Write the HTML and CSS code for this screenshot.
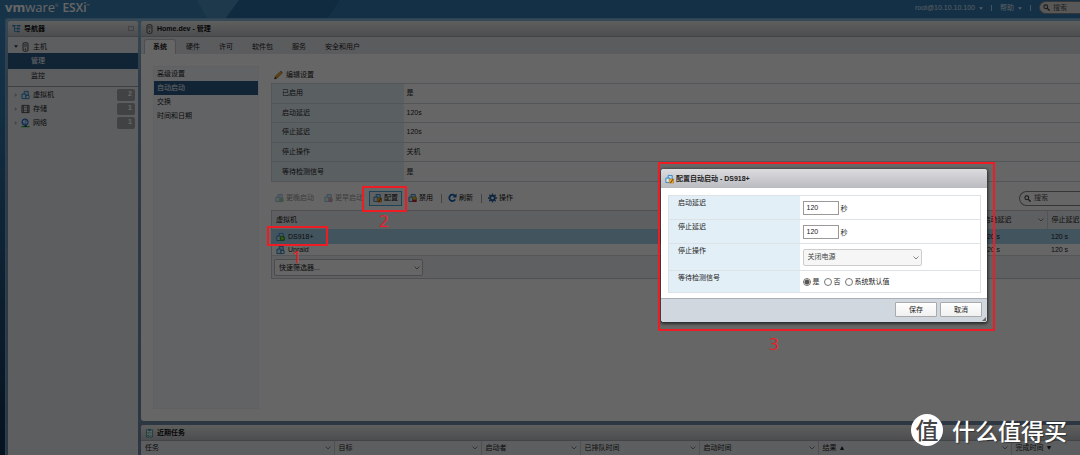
FILE: index.html
```html
<!DOCTYPE html>
<html lang="zh-CN">
<head>
<meta charset="utf-8">
<title>VMware ESXi</title>
<link rel="stylesheet" href="styles.css">
</head>
<body>
<svg class="defs" aria-hidden="true">
  <symbol id="i-vm" viewBox="0 0 20 20"><path d="M7 2h9v9H7z" fill="#b9def5" stroke="#2a7fbd" stroke-width="2"/><path d="M2 8h9v10H2z" fill="#cfe9fa" stroke="#2a7fbd" stroke-width="2"/><path d="M11 11h7v7h-7z" fill="#e4f3fc" stroke="#2a7fbd" stroke-width="2"/></symbol>
  <symbol id="i-vm-on" viewBox="0 0 20 20"><use href="#i-vm"/><circle cx="14" cy="13" r="6" fill="#3a9b1c"/><path d="M12 9l6 4-6 4z" fill="#a2ef4c"/></symbol>
  <symbol id="i-vm-up" viewBox="0 0 20 20"><use href="#i-vm"/><path d="M12 9h5v5h3l-5.500 6L9 14h3z" fill="#49a942"/></symbol>
  <symbol id="i-vm-down" viewBox="0 0 20 20"><use href="#i-vm"/><path d="M12 9h5v5h3l-5.500 6L9 14h3z" fill="#d43c3c"/></symbol>
  <symbol id="i-vm-edit" viewBox="0 0 20 20"><use href="#i-vm"/><path d="M9 10h10v9H9z" fill="#efb42c" stroke="#a96710"/><path d="M11 18l6-8 2 1-6 8z" fill="#8b3b10"/></symbol>
  <symbol id="i-vm-off" viewBox="0 0 20 20"><use href="#i-vm"/><path d="M10 8h9v5h-9z" fill="#e6b822" stroke="#99720a"/><path d="M10 14h9v5h-9z" fill="#d32222"/></symbol>
  <symbol id="i-host" viewBox="0 0 14 22"><rect x="1.500" y="1.500" width="11" height="19" rx="3" fill="#d5d5d5" stroke="#444" stroke-width="2"/><path d="M4 6h6M4 9h6" stroke="#555" stroke-width="1.500"/><circle cx="7" cy="16" r="1.500" fill="#444"/></symbol>
  <symbol id="i-tree" viewBox="0 0 22 20"><path d="M1 2h10M6 2v14h6M6 9h6" fill="none" stroke="#2682bf" stroke-width="2"/><path d="M1 0h6v4H1zM12 0h9v4h-9zM12 7h7v4h-7zM12 14h7v4h-7z" fill="#2682bf"/></symbol>
  <symbol id="i-disk" viewBox="0 0 20 20"><path d="M2 2h16v16H2z" fill="#ddd" stroke="#444" stroke-width="2"/><path d="M2 7h16M2 13h16" stroke="#777" stroke-width="1.500"/><path d="M5 2v16M15 2v16" stroke="#444" stroke-width="2"/></symbol>
  <symbol id="i-net" viewBox="0 0 20 20"><circle cx="9" cy="8" r="7" fill="#69aef0" stroke="#1554b5" stroke-width="2"/><path d="M4 6l4-2 2 3-3 4zM11 8l4-1-2 5z" fill="#dff0ff"/><path d="M1 18h18" stroke="#23b41a" stroke-width="3"/><path d="M8 15h5v4H8z" fill="#15418b"/></symbol>
  <symbol id="i-pencil" viewBox="0 0 20 20"><path d="M1 19l2-6L14 2l4 4L7 17z" fill="#e5a52c" stroke="#8d5a14"/><path d="M1 19l2-5 3 3z" fill="#222"/><path d="M14 2l2-1 3 3-1 2z" fill="#666"/></symbol>
  <symbol id="i-refresh" viewBox="0 0 20 20"><path d="M16 13a7 7 0 1 1-1-8" fill="none" stroke="#1562b3" stroke-width="4"/><path d="M19 0v9h-9z" fill="#1562b3"/></symbol>
  <symbol id="i-gear" viewBox="0 0 20 20"><circle cx="10" cy="10" r="5" fill="none" stroke="#245f9e" stroke-width="4"/><path d="M10 0v4M10 16v4M0 10h4M16 10h4M3 3l3 3M14 14l3 3M17 3l-3 3M6 14l-3 3" stroke="#245f9e" stroke-width="3"/></symbol>
  <symbol id="i-search" viewBox="0 0 20 20"><circle cx="8" cy="8" r="5.500" fill="none" stroke="#444" stroke-width="3"/><path d="M12 12l7 7" stroke="#444" stroke-width="4"/></symbol>
  <symbol id="i-chev" viewBox="0 0 12 8"><path d="M1 1l5 5 5-5" fill="none" stroke="#777" stroke-width="1.800"/></symbol>
  <symbol id="i-tasks" viewBox="0 0 20 20"><path d="M3 3h14v16H3z" fill="#e9f6fb" stroke="#3b8ea8" stroke-width="2"/><path d="M7 1h6v4H7z" fill="#3b8ea8"/><path d="M5 9l2 2 3-4M5 15l2 2 3-4" fill="none" stroke="#2c9c30" stroke-width="2"/><path d="M11 10h4M11 16h4" stroke="#3b8ea8" stroke-width="1.500"/></symbol>
  <symbol id="i-caret" viewBox="0 0 10 6"><path d="M0 0h10L5 6z" fill="currentColor"/></symbol>
  <symbol id="i-right" viewBox="0 0 6 10"><path d="M0 0l6 5-6 5z" fill="currentColor"/></symbol>
</svg>

<div class="app">
  <header class="topbar">
    <svg class="topbar-art" viewBox="0 0 1080 18" preserveAspectRatio="none" aria-hidden="true"><path d="M197 0h42l-13 18h-19z" fill="#4c90be"/><path d="M239 0h101l-12 18H226z" fill="#286aa0"/><path d="M340 0h740v18H328z" fill="#3278ae"/></svg>
    <div class="brand"><span class="vmw"><b>vm</b>ware<sup>®</sup></span><span class="esx">ESXi<sup>™</sup></span></div>
    <div class="account">
      <button class="topbtn">root@10.10.10.100 <svg class="caret"><use href="#i-caret"/></svg></button><span class="bar"></span>
      <button class="topbtn">帮助 <svg class="caret"><use href="#i-caret"/></svg></button><span class="bar"></span>
    </div>
    <label class="search search-top"><svg class="ic-s"><use href="#i-search"/></svg><input type="text" placeholder="搜索" aria-label="搜索"></label>
  </header>

  <div class="frame">
    <nav class="panel navigator">
      <h2 class="title"><svg class="ic"><use href="#i-tree"/></svg>导航器<span class="pin"></span></h2>
      <button class="node root"><svg class="tw"><use href="#i-caret"/></svg><svg class="ic"><use href="#i-host"/></svg>主机</button>
      <button class="node child on">管理</button>
      <button class="node child">监控</button>
      <div class="group">
        <button class="node"><svg class="tw dim"><use href="#i-right"/></svg><svg class="ic"><use href="#i-vm"/></svg>虚拟机<span class="count">2</span></button>
        <button class="node"><svg class="tw dim"><use href="#i-right"/></svg><svg class="ic"><use href="#i-disk"/></svg>存储<span class="count">1</span></button>
        <button class="node"><svg class="tw dim"><use href="#i-right"/></svg><svg class="ic"><use href="#i-net"/></svg>网络<span class="count">1</span></button>
      </div>
    </nav>

    <div class="right">
      <main class="panel main">
        <h1 class="title"><svg class="ic"><use href="#i-host"/></svg>Home.dev - 管理</h1>
        <div class="tabs">
          <button class="tab on">系统</button><button class="tab">硬件</button><button class="tab">许可</button><button class="tab">软件包</button><button class="tab">服务</button><button class="tab">安全和用户</button>
        </div>
        <div class="body">
          <div class="side">
            <button class="sideitem">高级设置</button>
            <button class="sideitem on">自动启动</button>
            <button class="sideitem">交换</button>
            <button class="sideitem">时间和日期</button>
          </div>
          <section class="content">
            <button class="edit"><svg class="ic"><use href="#i-pencil"/></svg>编辑设置</button>
            <table class="props">
              <tr><th>已启用</th><td>是</td></tr>
              <tr><th>启动延迟</th><td>120s</td></tr>
              <tr><th>停止延迟</th><td>120s</td></tr>
              <tr><th>停止操作</th><td>关机</td></tr>
              <tr><th>等待检测信号</th><td>是</td></tr>
            </table>
            <div class="toolbar">
              <button class="tool" disabled><svg class="ic"><use href="#i-vm-up"/></svg>更晚启动</button>
              <button class="tool" disabled><svg class="ic"><use href="#i-vm-down"/></svg>更早启动</button>
              <button class="tool focus"><svg class="ic"><use href="#i-vm-edit"/></svg>配置</button>
              <button class="tool"><svg class="ic"><use href="#i-vm-off"/></svg>禁用</button><span class="sep"></span>
              <button class="tool"><svg class="ic"><use href="#i-refresh"/></svg>刷新</button><span class="sep"></span>
              <button class="tool"><svg class="ic"><use href="#i-gear"/></svg>操作</button>
              <label class="search search-grid"><svg class="ic-s"><use href="#i-search"/></svg><input type="text" placeholder="搜索" aria-label="搜索虚拟机"></label>
            </div>
            <div class="gridbox">
              <table class="vms">
                <colgroup><col><col class="c-start"><col class="c-stop"></colgroup>
                <thead><tr><th>虚拟机</th><th><span class="hd">启动延迟<svg class="chev"><use href="#i-chev"/></svg></span></th><th>停止延迟</th></tr></thead>
                <tbody>
                  <tr class="on"><td><span class="vm"><svg class="ic"><use href="#i-vm-on"/></svg>DS918+</span></td><td>120 s</td><td>120 s</td></tr>
                  <tr class="cut"><td><span class="vm"><svg class="ic"><use href="#i-vm"/></svg>Unraid</span></td><td>120 s</td><td>120 s</td></tr>
                </tbody>
              </table>
              <div class="gridfoot"><span class="pick filter"><select aria-label="快速筛选器"><option>快速筛选器...</option></select><svg class="chev"><use href="#i-chev"/></svg></span></div>
            </div>
          </section>
        </div>
      </main>

      <section class="panel tasks">
        <h2 class="title"><svg class="ic"><use href="#i-tasks"/></svg>近期任务</h2>
        <table class="tasklist">
          <colgroup><col class="w-task"><col class="w-target"><col class="w-who"><col class="w-time"><col class="w-time"><col class="w-task"><col></colgroup>
          <tr>
            <th><span class="hd">任务<svg class="chev"><use href="#i-chev"/></svg></span></th>
            <th><span class="hd">目标<svg class="chev"><use href="#i-chev"/></svg></span></th>
            <th><span class="hd">启动者<svg class="chev"><use href="#i-chev"/></svg></span></th>
            <th><span class="hd">已排队时间<svg class="chev"><use href="#i-chev"/></svg></span></th>
            <th><span class="hd">启动时间<svg class="chev"><use href="#i-chev"/></svg></span></th>
            <th><span class="hd">结果 ▲<svg class="chev"><use href="#i-chev"/></svg></span></th>
            <th>完成时间 ▼</th>
          </tr>
        </table>
      </section>
    </div>
  </div>
</div>

<div class="shade"></div>

<form class="dialog" role="dialog" aria-labelledby="dlg-title">
  <h2 class="dlg-title" id="dlg-title"><svg class="ic"><use href="#i-vm-edit"/></svg>配置自动启动 - DS918+</h2>
  <div class="dlg-body">
    <table class="fields">
      <tr><th><label for="d-start">启动延迟</label></th><td><input class="num" id="d-start" type="text" value="120"> 秒</td></tr>
      <tr><th><label for="d-stop">停止延迟</label></th><td><input class="num" id="d-stop" type="text" value="120"> 秒</td></tr>
      <tr><th><label for="d-act">停止操作</label></th><td><span class="pick action"><select id="d-act"><option>关闭电源</option></select><svg class="chev"><use href="#i-chev"/></svg></span></td></tr>
      <tr><th>等待检测信号</th><td><div class="radios"><label><input type="radio" name="hb" checked>是</label><label><input type="radio" name="hb">否</label><label><input type="radio" name="hb">系统默认值</label></div></td></tr>
    </table>
  </div>
  <div class="dlg-foot"><button type="button" class="btn">保存</button><button type="button" class="btn">取消</button><span class="grip"></span></div>
</form>

<div class="mark mark-vm"></div><span class="step step-1">1</span>
<div class="mark mark-tool"></div><span class="step step-2">2</span>
<div class="mark mark-dialog"></div><span class="step step-3">3</span>
<div class="watermark"><span class="seal">值</span>什么值得买</div>
</body>
</html>
```

FILE: styles.css
```css
* { box-sizing: border-box; }
html, body { height: 100%; }
body {
  margin: 0;
  overflow: hidden;
  position: relative;
  font: 7px/10px "Liberation Sans", "Noto Sans CJK SC", sans-serif;
  color: #222;
  background: #16405f;
}
button, input, select { font: inherit; color: inherit; margin: 0; padding: 0; border: 0; background: none; }
button { display: flex; align-items: center; text-align: left; white-space: nowrap; }
h1, h2 { margin: 0; font-size: 7px; }
table { border-collapse: collapse; border-spacing: 0; }
th { font-weight: normal; text-align: left; }
td, th { padding: 0; }
.defs { position: absolute; width: 0; height: 0; }
.ic { width: 9px; height: 10px; flex: none; }
.ic-s { width: 7px; height: 7px; flex: none; }
.chev { width: 6px; height: 4px; flex: none; }

.app { height: 100vh; display: flex; flex-direction: column; background: linear-gradient(#3a86bf, #12304e); }

/* top bar */
.topbar { position: relative; height: 18px; flex: none; display: flex; align-items: center; padding-left: 5px; background: #3a80b2; color: #fff; }
.topbar-art { position: absolute; inset: 0; width: 100%; height: 100%; }
.brand { position: relative; display: flex; align-items: baseline; gap: 4px; font: 13px/18px "Open Sans", sans-serif; padding-bottom: 3px; }
.brand sup { font-size: 4px; line-height: 4px; vertical-align: 5px; }
.esx { font-size: 12px; font-weight: 600; }
.account { position: relative; margin-left: auto; display: flex; align-items: center; gap: 8px; padding-bottom: 2px; color: #dde8f2; }
.topbtn { gap: 4px; }
.caret { width: 4px; height: 3px; }
.bar { width: 1px; height: 6px; background: #b9cfe2; }
.search { display: flex; align-items: center; gap: 3px; border: 1px solid #888; border-right: 0; background: #fff; }
.search input { width: 100%; min-width: 0; height: 10px; outline: 0; }
.search input::placeholder { color: #555; opacity: 1; }
.search-top { position: relative; width: 41px; height: 13px; margin: 0 0 3px 8px; padding-left: 3px; border-radius: 7px 0 0 7px; background: #dcdcdc; }

/* frame */
.frame { flex: 1; min-height: 0; display: flex; gap: 3px; margin-left: 5px; padding: 2px 0 0 2px; border: 1px solid #6fa5cf; border-width: 1px 0 0 1px; border-top-left-radius: 3px; background: linear-gradient(#86b6d6, #7794b4 60px, #7088a5); }
.panel { background: #fff; border-radius: 3px 0 0 3px; overflow: hidden; }
.title { height: 16px; display: flex; align-items: center; gap: 3px; padding: 0 4px; background: linear-gradient(#eceded, #bfc1c5); border-bottom: 1px solid #a7abb3; color: #111; }
.navigator { width: 130px; flex: none; background: #e6eaee; border-radius: 3px 3px 0 0; }
.pin { margin-left: auto; width: 6px; height: 5px; border: 1px solid #a5a8ae; }
.node { width: 100%; height: 14px; gap: 3px; padding: 0 3px 0 6px; }
.root { height: 16px; padding-top: 3px; }
.child { padding-left: 23px; }
.child.on { height: 16px; }
.tw { width: 4px; height: 3px; color: #333; flex: none; }
.tw.dim { color: #aaa; height: 4px; }
.count { margin-left: auto; width: 18px; height: 12px; border-radius: 2px; background: #a3a5a8; color: #fff; text-align: right; padding-right: 3px; font-weight: bold; }
.group { margin-top: 3px; border-top: 1px solid #9b9ea3; padding-top: 1px; }
.on.child, .sideitem.on { background: #285a87; color: #fff; }

.right { flex: 1; min-width: 0; display: flex; flex-direction: column; gap: 4px; }
.main { flex: 1; min-height: 0; display: flex; flex-direction: column; }
.tabs { flex: none; display: flex; gap: 1px; height: 17px; padding: 2px 0 0 3px; background: #e2e5ea; }
.tab { padding: 0 9px; }
.tab.on { padding: 0 8px; background: #fff; font-weight: bold; border-radius: 3px 3px 0 0; border: 1px solid #bfc3ca; border-bottom: 0; }
.body { flex: 1; min-height: 0; display: flex; gap: 12px; padding: 12px 0 12px 12px; }
.side { width: 106px; flex: none; background: #f6f8fb; border: 1px solid #eceff3; }
.sideitem { width: 100%; height: 14px; padding-left: 3px; }
.content { flex: 1; min-width: 0; }
.edit { height: 17px; gap: 3px; padding-left: 3px; }

.props { width: 100%; height: 99px; border: 1px solid #d0d7dc; border-right: 0; }
.props th { width: 132px; padding-left: 10px; background: #e2eef5; }
.props td { padding-left: 3px; }
.props tr + tr { border-top: 1px solid #d0d7dc; }
.toolbar { display: flex; align-items: center; gap: 2px; height: 28px; padding-top: 4px; }
.tool { height: 15px; gap: 2px; padding: 0 4px; color: #111; }
.tool:disabled { color: #999; }
.tool:disabled .ic { opacity: .5; }
.focus { border: 1px solid #46a8d5; padding: 0 3px; background: #eef6fa; }
.sep { width: 1px; height: 9px; margin-left: 2px; background: #aaa; }
.search-grid { margin-left: auto; width: 61px; height: 15px; padding-left: 4px; border-radius: 8px 0 0 8px; }
.gridbox { border: 1px solid #c4c8ce; border-right: 0; background: #eef0f4; }
.vms { width: 100%; table-layout: fixed; background: #fff; }
.vms th { height: 18px; background: #eceef2; border-left: 1px solid #ccd0d6; padding-left: 4px; }
.vms th:first-child { border-left: 0; }
.vms td { height: 15px; padding-left: 4px; }
.vms .cut td { height: 11px; }
.vms .on td { background: #a5d1ec; }
.c-start { width: 68px; }
.c-stop { width: 33px; }
.vm { display: flex; align-items: center; gap: 3px; }
.hd { display: flex; align-items: center; justify-content: space-between; padding-right: 3px; }
.gridfoot { padding: 3px 2px 2px; border-top: 1px solid #d5d8dd; }
.pick { position: relative; display: block; }
.pick select { display: block; width: 100%; height: 17px; padding: 0 4px; appearance: none; border: 1px solid #bbb; border-radius: 2px; background: #fff; }
.pick .chev { position: absolute; right: 3px; top: 7px; pointer-events: none; }
.filter { width: 149px; }

.tasks { flex: none; border-radius: 3px 0 0 0; }
.tasklist { width: 100%; table-layout: fixed; }
.tasklist th { height: 14px; padding-left: 4px; background: #e8ebef; white-space: nowrap; }
.tasklist th + th { border-left: 1px solid #c4c8ce; }
.w-task { width: 193px; }
.w-target { width: 147px; }
.w-who { width: 99px; }
.w-time { width: 119px; }

.shade { position: absolute; inset: 0; background: rgba(0, 0, 0, .6); }

/* dialog */
.dialog { position: absolute; left: 661px; top: 169px; width: 326px; margin: 0; border-radius: 3px; background: #fff; overflow: hidden; box-shadow: 0 1px 3px 1px rgba(0, 0, 0, .6); }
.dlg-title { height: 19px; display: flex; align-items: center; gap: 2px; padding: 0 4px; background: linear-gradient(#dcdcdf, #babbc0); color: #222; }
.dlg-body { padding: 7px 6px 5px 7px; }
.fields { width: 100%; border: 1px solid #dde2e6; }
.fields tr { height: 24px; border-top: 1px solid #dde2e6; }
.fields tr:nth-child(3) { height: 27px; }
.fields tr:last-child { height: 22px; }
.fields th { width: 131px; padding: 2px 0 0 9px; background: #e3eff6; vertical-align: top; }
.fields td { padding: 0 0 0 3px; }
.num { width: 36px; height: 14px; padding: 0 3px; border: 1px solid #999; background: #fff; }
.action { width: 119px; }
.action select { background: #f6f6f6; border-color: #ccc; color: #444; }
.radios { display: flex; gap: 4px; }
.radios label { display: flex; align-items: center; gap: 2px; }
.radios input { appearance: none; width: 8px; height: 8px; border: 1px solid #777; border-radius: 50%; background: #fff; }
.radios input:checked { background: radial-gradient(circle, #555 0 2px, #fff 3px); }
.dlg-foot { position: relative; display: flex; justify-content: flex-end; gap: 3px; padding: 3px 5px 5px; border-top: 1px solid #aab0b8; background: #d0d7df; }
.btn { width: 42px; height: 15px; justify-content: center; border: 1px solid #aaa; border-radius: 1px; background: linear-gradient(#fff, #f0f0f0); }
.grip { position: absolute; right: 1px; bottom: 1px; border: 2px solid #666; border-top-color: transparent; border-left-color: transparent; }

/* annotations */
.mark { position: absolute; border: 2px solid #ee1c24; }
.mark-vm { left: 267px; top: 226px; width: 61px; height: 20px; }
.mark-tool { left: 362px; top: 186px; width: 45px; height: 26px; }
.mark-dialog { left: 658px; top: 162px; width: 337px; height: 169px; }
.step { position: absolute; color: #ee1c24; font: 17px/18px "Open Sans", sans-serif; }
.step-1 { left: 292px; top: 248px; }
.step-2 { left: 379px; top: 212px; }
.step-3 { left: 769px; top: 335px; }
.watermark { position: absolute; right: 13px; bottom: 9px; display: flex; align-items: center; gap: 9px; color: #fff; font: 500 23px/32px "Noto Sans CJK SC", sans-serif; text-shadow: 1px 1px 1px rgba(0, 0, 0, .4); }
.seal { width: 32px; height: 32px; border-radius: 50%; background: #fff; color: #444; text-align: center; font-size: 23px; line-height: 30px; text-shadow: none; }
```
